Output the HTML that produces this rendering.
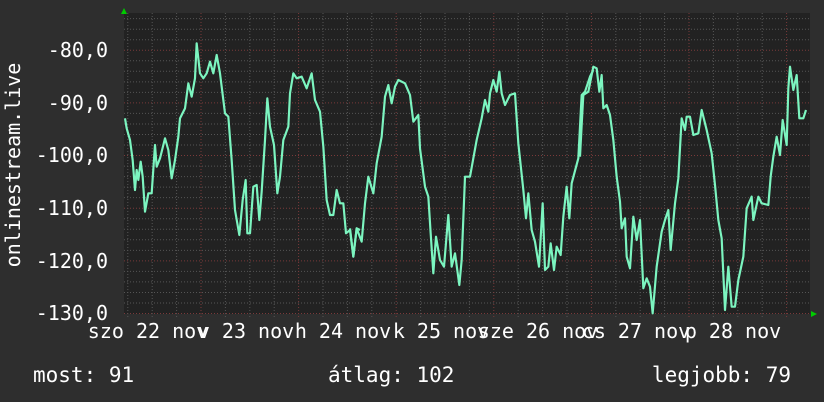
<!DOCTYPE html>
<html><head><meta charset="utf-8"><style>
html,body{margin:0;padding:0;background:#2e2e2e;}
svg{display:block}
text{font-family:"DejaVu Sans Mono","Liberation Mono",monospace;font-size:20px;fill:#fff}
text.lg{font-size:21px}
</style></head><body>
<svg width="824" height="402" viewBox="0 0 824 402" xmlns="http://www.w3.org/2000/svg">
<rect width="824" height="402" fill="#2e2e2e"/>
<rect x="124" y="13" width="686" height="301" fill="#222"/>
<g id="grid" stroke-width="1" fill="none"></g>
<script>
(function(){
var ns="http://www.w3.org/2000/svg",g=document.getElementById('grid');
function ln(x1,y1,x2,y2,c){var l=document.createElementNS(ns,'line');l.setAttribute('x1',x1);l.setAttribute('y1',y1);l.setAttribute('x2',x2);l.setAttribute('y2',y2);l.setAttribute('stroke',c);l.setAttribute('stroke-dasharray','1,2');g.appendChild(l);}
for(var i=0;i<29;i++){var y=313.5-i*10.53;if(y<13)break;ln(124,y,810,y,(i%5==0)?'#7a3a3a':'#555');}
for(var j=0;j<29;j++){var x=127.8+j*24.4;if(x>810)break;ln(x,13,x,317,((j-3)%4==0)?'#7a3a3a':'#555');}
})();
</script>
<g fill="none" stroke="#7cf5c0" stroke-width="6.5" stroke-linejoin="round" transform="translate(120,30) scale(0.33333)">
<polyline points="15,265 20,295 30,330 38,390 45,480 50,420 55,450 62,395 68,440 75,545 85,490 95,490 105,345 110,410 120,385 135,325 145,360 155,445 165,390 175,320 180,265 195,235 205,160 215,200 225,145 230,40 240,130 250,145 260,130 270,95 280,130 290,75 300,130 315,250 325,260 335,390 345,540 358,615 368,510 377,450 382,610 390,610 400,470 410,465 418,570 425,485 435,330 442,205 450,290 462,345 472,490 480,440 490,330 505,290 510,190 520,130 530,145 545,140 560,175 575,130 585,210 600,245 610,350 620,510 630,555 640,555 650,480 660,520 670,520 678,610 690,600 700,680 710,595 720,600"/>
</g>
<g fill="none" stroke="#7cf5c0" stroke-width="6.5" stroke-linejoin="round" transform="translate(350,30) scale(0.33333)">
<polyline points="0,595 10,680 20,595 35,635 45,520 55,440 70,490 80,400 95,320 105,200 115,165 125,220 135,170 145,150 165,160 180,195 190,275 205,255 210,355 225,470 235,500 242,610 250,730 258,620 270,690 282,710 295,555 305,710 315,670 328,765 335,690 345,440 360,440 370,385 380,330 395,265 405,210 415,245 420,190 430,150 440,185 448,125 455,190 465,225 480,195 495,190 505,340 520,480 528,565 535,490 545,600 555,635 567,710 578,520 585,720 595,710 602,640 612,720 620,650 632,675 640,560 650,470 658,565 665,460 685,385 695,195 705,185 720,140 730,120"/>
</g>
<g fill="none" stroke="#7cf5c0" stroke-width="6.5" stroke-linejoin="round" transform="translate(580,30) scale(0.33333)">
<polyline points="0,380 5,285 10,195 25,185 40,110 50,115 58,185 65,135 70,235 80,225 90,255 100,330 110,440 120,515 125,595 135,565 140,680 150,715 160,560 170,630 180,570 190,775 200,745 210,770 218,850 230,710 245,605 255,570 265,540 272,660 285,520 295,445 305,265 315,300 320,260 330,260 340,315 355,310 365,240 380,300 395,370 405,465 415,570 425,625 435,840 445,710 455,830 465,830 475,750 490,680 500,535 515,500 520,570 535,500 545,520 565,525 572,440 580,380 590,320 600,375 608,270 620,345 625,175 630,110 640,180 650,135 658,265 670,265 678,240"/>
</g>
<polygon points="121,14 127,14 124,8" fill="#0c0"/>
<polygon points="811,311 811,317 817,314" fill="#0c0"/>
<g text-anchor="end">
<text x="108" y="57">-80,0</text>
<text x="108" y="110">-90,0</text>
<text x="108" y="162">-100,0</text>
<text x="108" y="215">-110,0</text>
<text x="108" y="268">-120,0</text>
<text x="108" y="320">-130,0</text>
</g>
<text transform="translate(20,165) rotate(-90)" text-anchor="middle">onlinestream.live</text>
<g text-anchor="middle">
<text x="148" y="338">szo 22 nov</text>
<text x="246" y="338">v 23 nov</text>
<text x="343" y="338">h 24 nov</text>
<text x="441" y="338">k 25 nov</text>
<text x="538" y="338">sze 26 nov</text>
<text x="636" y="338">cs 27 nov</text>
<text x="733" y="338">p 28 nov</text>
</g>
<text class="lg" x="33" y="382">most: 91</text>
<text class="lg" x="328" y="382">átlag: 102</text>
<text class="lg" x="791" y="382" text-anchor="end">legjobb: 79</text>
</svg>
</body></html>
